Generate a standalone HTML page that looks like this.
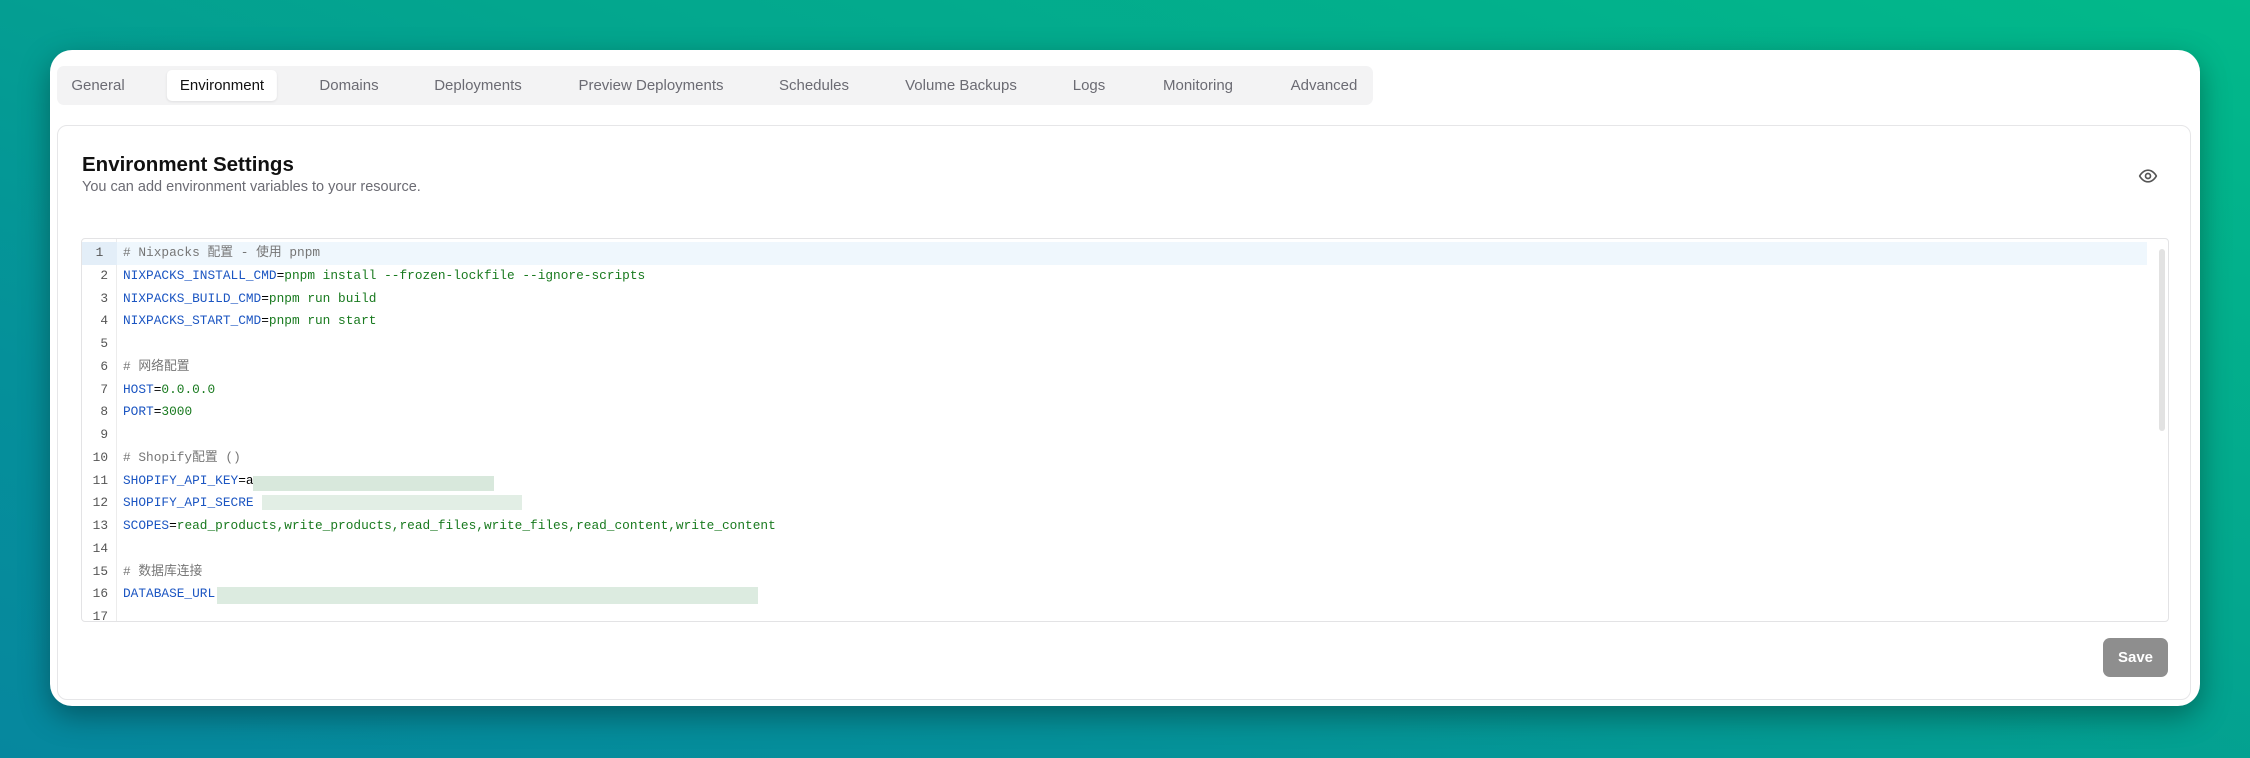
<!DOCTYPE html>
<html><head><meta charset="utf-8"><style>
*{box-sizing:border-box;margin:0;padding:0}
body{width:2250px;height:758px;overflow:hidden;font-family:"Liberation Sans","Noto Sans CJK SC",sans-serif;background:linear-gradient(200deg,#02b98a 0%,#03a68e 40%,#05909a 75%,#06879e 100%);position:relative}
.card{position:absolute;left:50px;top:50px;width:2150px;height:656px;background:#fff;border-radius:22px;box-shadow:0 10px 30px rgba(0,0,0,.35)}
.tabs{position:absolute;left:7px;top:16px;width:1316px;height:39px;background:#f3f3f4;border-radius:7px}
.tab{position:absolute;top:0;height:39px;line-height:39px;font-size:15px;color:#6b6b73;transform:translateX(-50%);white-space:nowrap}
.tab.act{background:#fff;color:#111;border-radius:5px;top:4px;height:31px;line-height:31px;padding:0 13px;box-shadow:0 1px 2px rgba(0,0,0,.08)}
.inner{position:absolute;left:7px;top:75px;width:2134px;height:575px;border:1.5px solid #e6e6e8;border-radius:10px}
h1{position:absolute;left:24px;top:27px;font-size:20.5px;font-weight:600;color:#111}
.sub{position:absolute;left:24px;top:53px;font-size:14.5px;color:#6b6b73}
.eye{position:absolute;left:2080px;top:40px}
.ed{position:absolute;left:23px;top:112px;width:2088px;height:384px;border:1.5px solid #e3e3e5;border-radius:4px;overflow:hidden;font-family:"Liberation Mono","Noto Sans CJK SC",monospace;font-size:12.8px}
.gut{position:absolute;left:0;top:0;width:35px;height:100%;border-right:1px solid #ececec}
.ln{position:absolute;left:0;width:2065px;height:22.75px;line-height:22.75px}
.ln .n{position:absolute;left:0;width:26px;text-align:right;color:#555}
.ln .t{position:absolute;left:41px;white-space:pre}
.k{color:#1b55c2}.v{color:#197a1f}.c{color:#767676}
.hl{background:#eff7fd}
.blur{position:absolute;background:#d8e8dc}
.sb{position:absolute;right:3px;top:10px;width:6px;height:182px;background:#e2e2e2;border-radius:3px}
.save{position:absolute;left:2045px;top:512px;width:65px;height:39px;background:#8e8e8e;border-radius:7px;color:#fff;font-weight:700;font-size:15px;text-align:center;line-height:39px}
</style></head><body>
<div class="card">
<div class="tabs">
<div class="tab" style="left:41px">General</div>
<div class="tab act" style="left:165px">Environment</div>
<div class="tab" style="left:292px">Domains</div>
<div class="tab" style="left:421px">Deployments</div>
<div class="tab" style="left:594px">Preview Deployments</div>
<div class="tab" style="left:757px">Schedules</div>
<div class="tab" style="left:904px">Volume Backups</div>
<div class="tab" style="left:1032px">Logs</div>
<div class="tab" style="left:1141px">Monitoring</div>
<div class="tab" style="left:1267px">Advanced</div>
</div>
<div class="inner">
<h1>Environment Settings</h1>
<div class="sub">You can add environment variables to your resource.</div>
<svg class="eye" width="20" height="20" viewBox="0 0 24 24" fill="none" stroke="#555" stroke-width="2" stroke-linecap="round" stroke-linejoin="round"><path d="M2 12s3.6-7 10-7 10 7 10 7-3.6 7-10 7-10-7-10-7z"/><circle cx="12" cy="12" r="3"/></svg>
<div class="ed">
<div class="gut"></div>
<div class="ln hl" style="top:3px"><span class="n" style="background:#e3eef8;width:35px;text-align:center">1</span><span class="t c"># Nixpacks 配置 - 使用 pnpm</span></div>
<div class="ln" style="top:25.75px"><span class="n">2</span><span class="t"><span class="k">NIXPACKS_INSTALL_CMD</span>=<span class="v">pnpm install --frozen-lockfile --ignore-scripts</span></span></div>
<div class="ln" style="top:48.5px"><span class="n">3</span><span class="t"><span class="k">NIXPACKS_BUILD_CMD</span>=<span class="v">pnpm run build</span></span></div>
<div class="ln" style="top:71.25px"><span class="n">4</span><span class="t"><span class="k">NIXPACKS_START_CMD</span>=<span class="v">pnpm run start</span></span></div>
<div class="ln" style="top:94px"><span class="n">5</span></div>
<div class="ln" style="top:116.75px"><span class="n">6</span><span class="t c"># 网络配置</span></div>
<div class="ln" style="top:139.5px"><span class="n">7</span><span class="t"><span class="k">HOST</span>=<span class="v">0.0.0.0</span></span></div>
<div class="ln" style="top:162.25px"><span class="n">8</span><span class="t"><span class="k">PORT</span>=<span class="v">3000</span></span></div>
<div class="ln" style="top:185px"><span class="n">9</span></div>
<div class="ln" style="top:207.75px"><span class="n">10</span><span class="t c"># Shopify配置 ()</span></div>
<div class="ln" style="top:230.5px"><span class="n">11</span><span class="t"><span class="k">SHOPIFY_API_KEY</span>=a</span></div>
<div class="ln" style="top:253.25px"><span class="n">12</span><span class="t"><span class="k">SHOPIFY_API_SECRE</span></span></div>
<div class="ln" style="top:276px"><span class="n">13</span><span class="t"><span class="k">SCOPES</span>=<span class="v">read_products,write_products,read_files,write_files,read_content,write_content</span></span></div>
<div class="ln" style="top:298.75px"><span class="n">14</span></div>
<div class="ln" style="top:321.5px"><span class="n">15</span><span class="t c"># 数据库连接</span></div>
<div class="ln" style="top:344.25px"><span class="n">16</span><span class="t"><span class="k">DATABASE_URL</span></span></div>
<div class="ln" style="top:367px"><span class="n">17</span></div>
<div class="blur" style="left:171px;top:237px;width:241px;height:15px"></div>
<div class="blur" style="left:180px;top:256px;width:260px;height:15px;background:#e2eee5"></div>
<div class="blur" style="left:135px;top:348px;width:541px;height:17px;background:#dcebe0"></div>
<div class="sb"></div>
</div>
<div class="save">Save</div>
</div>
</div>
</body></html>
